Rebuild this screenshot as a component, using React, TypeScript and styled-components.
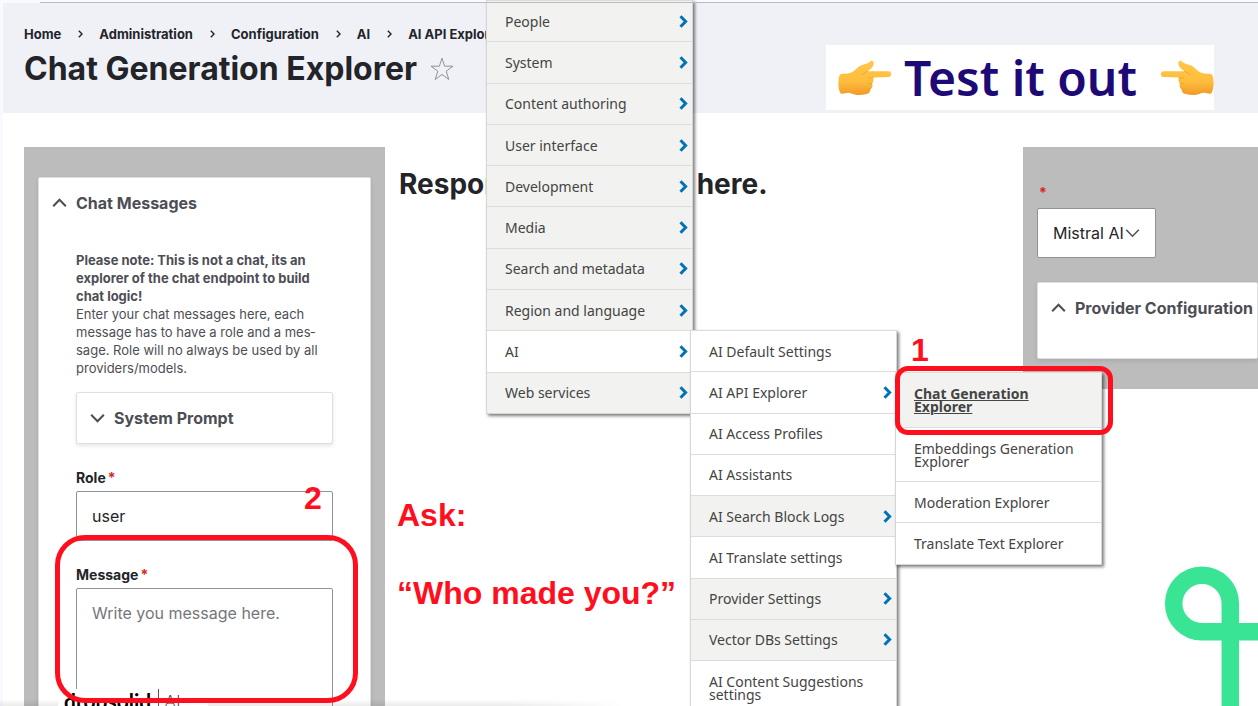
import React from "react";
import styled, { createGlobalStyle, css } from "styled-components";

const Global = createGlobalStyle`
  *, *::before, *::after { box-sizing: border-box; }
  html, body { margin: 0; padding: 0; }
  body {
    background: #f8faff;
    color: #232429;
    font-family: Inter, "Liberation Sans", sans-serif;
    font-size: 16px;
  }
`;

const RED = "#ff0f1e";

const Slide = styled.div`
  position: relative;
  height: 100vh;
  overflow: hidden;
  padding: 3px 0 0 3px;
`;

const TopRule = styled.div`
  position: absolute;
  top: 2px;
  left: 40px;
  right: 0;
  height: 1px;
  background: #b9bbc2;
`;

const Header = styled.header`
  height: 110px;
  padding: 22px 21px 0;
  background: #f0f1f7;
`;

const Breadcrumb = styled.ol`
  display: flex;
  align-items: center;
  margin: 0;
  padding: 0;
  list-style: none;
  font-size: 13px;
  font-weight: 700;
  line-height: 18px;
  white-space: nowrap;
`;

const Crumb = styled.li`
  display: flex;
  align-items: center;

  a {
    color: inherit;
    text-decoration: none;
  }

  svg {
    margin: 0 16px 0 17px;
  }
`;

const TitleRow = styled.div`
  display: flex;
  align-items: center;
  gap: 12px;
`;

const PageTitle = styled.h1`
  margin: 0;
  font-size: 32px;
  font-weight: 700;
  line-height: 52px;
  white-space: nowrap;
`;

const StarButton = styled.button`
  display: flex;
  padding: 0;
  border: 0;
  background: none;
`;

const Columns = styled.main`
  display: grid;
  grid-template-columns: 361px 1fr 235px;
  align-items: start;
  min-height: 100vh;
  padding: 34px 0 0 21px;
  background: #fff;
`;

const Panel = styled.section<{ $tall?: boolean }>`
  padding: ${(p) => (p.$tall ? "30px 14px" : "36px 0 30px 14px")};
  background: #bcbcbc;
`;

const Card = styled.div<{ $inset?: boolean }>`
  border: 1px solid #dedfe4;
  border-radius: 2px;
  background: #fff;
  box-shadow: 0 2px 4px rgba(0, 0, 0, 0.1);
  ${(p) => p.$inset && css`margin-top: 15px;`}
`;

const Summary = styled.button`
  display: flex;
  align-items: center;
  gap: 9px;
  width: 100%;
  height: 50px;
  padding: 0 0 0 13px;
  border: 0;
  background: none;
  color: #4d4e55;
  font: 700 16px/20px Inter, "Liberation Sans", sans-serif;
  white-space: nowrap;
`;

const CardBody = styled.div`
  padding: 23px 37px 60px;
`;

const EmptyBody = styled.div`
  height: 25px;
`;

const Note = styled.p`
  margin: 0;
  color: #4d4e55;
  font-size: 13px;
  line-height: 18px;

  strong {
    display: block;
    font-weight: 700;
  }
`;

const Field = styled.div`
  display: flex;
  flex-direction: column;
  margin-top: 24px;
`;

const Label = styled.label`
  margin-bottom: 3px;
  font-size: 14px;
  font-weight: 700;
  line-height: 20px;
`;

const Required = styled.span`
  margin-left: 2px;
  color: #dc2323;
`;

const control = css`
  width: 100%;
  border: 1px solid #8e929c;
  border-radius: 2px;
  background: #fff;
  color: #232429;
  font: 16px/24px Inter, "Liberation Sans", sans-serif;
`;

const TextInput = styled.input`
  ${control}
  height: 50px;
  padding: 0 15px;
`;

const TextArea = styled.textarea`
  ${control}
  height: 150px;
  padding: 12px 15px;
  resize: none;

  &::placeholder {
    color: #75767b;
    opacity: 1;
  }
`;

const SelectBox = styled.div`
  position: relative;
  width: 119px;
  margin-bottom: 24px;

  svg {
    position: absolute;
    top: 20px;
    right: 16px;
    pointer-events: none;
  }
`;

const Select = styled.select`
  ${control}
  height: 50px;
  padding: 0 0 0 15px;
  appearance: none;
`;

const ProviderLabel = styled(Label)`
  display: block;
  margin-bottom: 5px;
`;

const Response = styled.section`
  padding: 18px 0 0 14px;
`;

const ResponseTitle = styled.h2`
  margin: 0;
  font-size: 28px;
  font-weight: 700;
  line-height: 38px;
  white-space: nowrap;
`;

const Callout = styled.div`
  margin-top: 294px;
  margin-left: -2px;
  color: ${RED};
  font: bold 32px/36px "Liberation Sans", Arial, sans-serif;
  white-space: nowrap;

  p {
    margin: 0 0 42px;
  }
`;

const Menu = styled.ul<{ $left: number; $top: number; $height: number; $rows: string }>`
  position: absolute;
  left: ${(p) => p.$left}px;
  top: ${(p) => p.$top}px;
  display: grid;
  grid-template-rows: ${(p) => p.$rows};
  width: 207px;
  height: ${(p) => p.$height}px;
  margin: 0;
  padding: 0;
  border: 1px solid #d6d6d6;
  border-top: 0;
  background: #fff;
  box-shadow: 2px 2px 3px rgba(0, 0, 0, 0.5);
  list-style: none;
`;

const MenuItem = styled.li<{ $shade?: boolean }>`
  border-top: 1px solid #dcdcdc;
  background: ${(p) => (p.$shade ? "#f2f2f0" : "#fff")};
`;

const MenuLink = styled.a<{ $active?: boolean }>`
  display: flex;
  align-items: center;
  justify-content: space-between;
  height: 100%;
  padding: 0 4px 0 18px;
  color: #444;
  font-family: "Noto Sans", "Open Sans", sans-serif;
  font-size: 14px;
  font-weight: ${(p) => (p.$active ? 700 : 400)};
  line-height: 13px;
  text-decoration: ${(p) => (p.$active ? "underline" : "none")};

  span {
    max-width: 162px;
  }
`;

const Banner = styled.div`
  position: absolute;
  top: 45px;
  right: 44px;
  display: flex;
  align-items: center;
  gap: 13px;
  width: 388px;
  height: 65px;
  padding-left: 12px;
  background: #fff;
  color: #1d0a77;
  font: 600 48px/64px "Noto Sans", "Open Sans", sans-serif;
  white-space: nowrap;

  svg {
    flex: none;
  }

  svg:last-child {
    margin-left: auto;
  }
`;

const Outline = styled.div<{ $x: number; $y: number; $w: number; $h: number; $r: number }>`
  position: absolute;
  left: ${(p) => p.$x}px;
  top: ${(p) => p.$y}px;
  width: ${(p) => p.$w}px;
  height: ${(p) => p.$h}px;
  border: 5px solid ${RED};
  border-radius: ${(p) => p.$r}px;
  pointer-events: none;
`;

const Step = styled.span<{ $x: number; $y: number }>`
  position: absolute;
  left: ${(p) => p.$x}px;
  top: ${(p) => p.$y}px;
  color: ${RED};
  font: bold 32px/36px "Liberation Sans", Arial, sans-serif;
`;

const BottomFade = styled.div`
  position: absolute;
  left: 0;
  bottom: 0;
  width: 50%;
  height: 7px;
  background: linear-gradient(to bottom, rgba(0, 0, 0, 0), rgba(0, 0, 0, 0.08));
  mask-image: linear-gradient(to right, #000 80%, transparent);
`;

const Brand = styled.div`
  position: absolute;
  left: 58px;
  top: 689px;
  display: flex;
  align-items: flex-start;
  gap: 7px;
  width: 150px;
  height: 24px;
  padding-left: 6px;
  background: #fff;
  color: #000;
  font: 700 21px/24px Lato, sans-serif;

  small {
    padding-left: 5px;
    border-left: 1px solid #555;
    color: #333;
    font: 300 18px/24px Lato, sans-serif;
  }
`;

const Mark = styled.svg`
  position: absolute;
  right: 0;
  top: 560px;
`;

function Chevron({ up, thin }: { up?: boolean; thin?: boolean }) {
  return (
    <svg width="15" height="10" viewBox="0 0 15 10" fill="none" stroke="#4d4e55" strokeWidth={thin ? 1.5 : 2}>
      <path d={up ? "M1.2 8.3 7.5 1.8 13.8 8.3" : "M1.2 1.7 7.5 8.2 13.8 1.7"} />
    </svg>
  );
}

function Arrow() {
  return (
    <svg width="9" height="13" viewBox="0 0 9 13" fill="none" stroke="#0072b9" strokeWidth="3">
      <path d="M1.5 1.3 6.6 6.5 1.5 11.7" />
    </svg>
  );
}

function Hand({ flip }: { flip?: boolean }) {
  const id = flip ? "skin-left" : "skin-right";
  return (
    <svg width="53" height="36" viewBox="0 0 53 36">
      <defs>
        <linearGradient id={id} x1="0" y1="0" x2="0" y2="1">
          <stop offset="0" stopColor="#ffc74a" />
          <stop offset="0.6" stopColor="#ffbd3c" />
          <stop offset="1" stopColor="#f09a28" />
        </linearGradient>
      </defs>
      <g transform={flip ? "translate(53 0) scale(-1 1)" : undefined}>
        <path
          fill={`url(#${id})`}
          d="M2 14.5C5 13.200 9 14 12 13C17 11.500 19 7 23 5.500C27 4 30 3.500 32.500 1.200C34.500-.2 36.300 2 35.600 4.500C34.800 7.500 32.500 9.500 29.500 11.200H50.500C54 11.200 54 17 50.500 17L35 17.500C36.200 19.500 35.500 22 34 23.200C35 25.500 34.500 28 32.500 29C32.500 32 31 33.500 28.500 34C23 35.500 17 35.500 13 33.300C9 31.500 6 34.500 3 33.500C0 31 -.5 18 2 14.500Z"
        />
        <path
          fill="none"
          stroke="#e59a30"
          strokeWidth="0.7"
          strokeLinecap="round"
          d="M35 17.600C33 18.200 32 17.800 30.500 17.900M34 23.300C33 23.800 32 23.600 31 23.700M32.300 29C31.500 29.500 30.800 29.400 30 29.300M29.500 11.200C27.500 12 26 13 24.500 14.500"
        />
      </g>
    </svg>
  );
}

type Entry = { label: string; sub?: boolean; shade?: boolean; active?: boolean };

const CONFIG_MENU: Entry[] = [
  "People", "System", "Content authoring", "User interface", "Development",
  "Media", "Search and metadata", "Region and language", "AI", "Web services",
].map((label) => ({ label, sub: true, shade: label !== "AI" }));

const AI_MENU: Entry[] = [
  { label: "AI Default Settings" },
  { label: "AI API Explorer", sub: true },
  { label: "AI Access Profiles" },
  { label: "AI Assistants" },
  { label: "AI Search Block Logs", sub: true, shade: true },
  { label: "AI Translate settings" },
  { label: "Provider Settings", sub: true, shade: true },
  { label: "Vector DBs Settings", sub: true, shade: true },
  { label: "AI Content Suggestions settings" },
];

const EXPLORER_MENU: Entry[] = [
  { label: "Chat Generation Explorer", shade: true, active: true },
  { label: "Embeddings Generation Explorer" },
  { label: "Moderation Explorer" },
  { label: "Translate Text Explorer" },
];

function MenuEntries({ entries }: { entries: Entry[] }) {
  return (
    <>
      {entries.map((e) => (
        <MenuItem key={e.label} $shade={e.shade}>
          <MenuLink href="#" $active={e.active}>
            <span>{e.label}</span>
            {e.sub && <Arrow />}
          </MenuLink>
        </MenuItem>
      ))}
    </>
  );
}

const CRUMBS = ["Home", "Administration", "Configuration", "AI", "AI API Explorer"];

export default function App() {
  return (
    <>
      <Global />
      <Slide>
        <Header>
          <nav aria-label="Breadcrumb">
            <Breadcrumb>
              {CRUMBS.map((c, i) => (
                <Crumb key={c}>
                  {i > 0 && (
                    <svg width="5" height="8" viewBox="0 0 5 8" fill="none" stroke="#232429" strokeWidth="1.400">
                      <path d="M.8.8 4 4 .8 7.200" />
                    </svg>
                  )}
                  <a href="#">{c}</a>
                </Crumb>
              ))}
            </Breadcrumb>
          </nav>
          <TitleRow>
            <PageTitle>Chat Generation Explorer</PageTitle>
            <StarButton aria-label="Add to shortcuts">
              <svg width="26" height="26" viewBox="0 0 26 26" fill="none" stroke="#8e929c" strokeWidth="1">
                <path d="M13 2.200 15.600 10.200H24L17.200 15.200 19.800 23.500 13 18.400 6.200 23.500 8.800 15.200 2 10.200H10.400Z" />
              </svg>
            </StarButton>
          </TitleRow>
        </Header>

        <Columns>
          <Panel $tall>
            <Card>
              <Summary>
                <Chevron up />
                Chat Messages
              </Summary>
              <CardBody>
                <Note>
                  <strong>Please note: This is not a chat, its an explorer of the chat endpoint to build chat logic!</strong>
                  Enter your chat messages here, each message has to have a role and a mes&shy;sage. Role will no always be used by all providers/models.
                </Note>
                <Card $inset>
                  <Summary>
                    <Chevron />
                    System Prompt
                  </Summary>
                </Card>
                <Field>
                  <Label htmlFor="role">Role<Required>*</Required></Label>
                  <TextInput id="role" defaultValue="user" />
                </Field>
                <Field>
                  <Label htmlFor="message">Message<Required>*</Required></Label>
                  <TextArea id="message" placeholder="Write you message here." />
                </Field>
              </CardBody>
            </Card>
          </Panel>

          <Response>
            <ResponseTitle>Response will appear here.</ResponseTitle>
            <Callout>
              <p>Ask:</p>
              <p>“Who made you?”</p>
            </Callout>
          </Response>

          <Panel>
            <ProviderLabel htmlFor="provider"><Required>*</Required></ProviderLabel>
            <SelectBox>
              <Select id="provider">
                <option>Mistral AI</option>
              </Select>
              <Chevron thin />
            </SelectBox>
            <Card>
              <Summary>
                <Chevron up />
                Provider Configuration
              </Summary>
              <EmptyBody />
            </Card>
          </Panel>
        </Columns>

        <Menu $left={486} $top={0} $height={414} $rows="repeat(10, 1fr)">
          <MenuEntries entries={CONFIG_MENU} />
        </Menu>
        <TopRule />
        <Menu $left={690} $top={330} $height={386} $rows="repeat(8, 1fr) 55px">
          <MenuEntries entries={AI_MENU} />
        </Menu>
        <Menu $left={895} $top={372} $height={193} $rows="55px 54px 41px 41px">
          <MenuEntries entries={EXPLORER_MENU} />
        </Menu>

        <Banner>
          <Hand />
          <span>Test it out</span>
          <Hand flip />
        </Banner>

        <Mark width="94" height="146" viewBox="0 0 94 146" fill="none" stroke="#39e594" strokeWidth="17.500">
          <path d="M66.300 146V43.500A28.300 28.300 0 1 0 38 71.800H94" />
        </Mark>

        <BottomFade />
        <Brand>
          dropsolid <small>AI</small>
        </Brand>

        <Outline $x={55} $y={535} $w={303} $h={168} $r={30} />
        <Outline $x={895} $y={366} $w={218} $h={69} $r={13} />
        <Step $x={911} $y={332}>1</Step>
        <Step $x={304} $y={480}>2</Step>
      </Slide>
    </>
  );
}
